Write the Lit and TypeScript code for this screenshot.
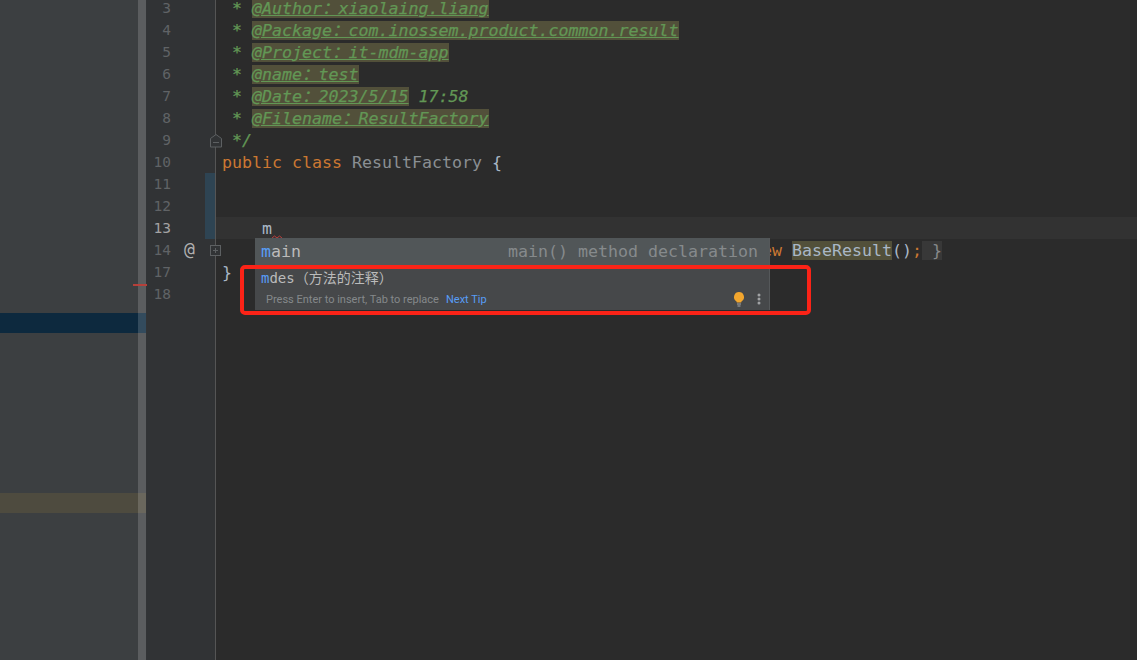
import { LitElement, html, css } from "lit";
import { customElement } from "lit/decorators.js";

const nums = ["3","4","5","6","7","8","9","10","11","12","13","14","17","18"];
const doc: [string, string, string?][] = [
  ["@Author：xiaolaing.liang", ""],
  ["@Package：com.inossem.product.common.result", ""],
  ["@Project：it-mdm-app", ""],
  ["@name：test", ""],
  ["@Date：2023/5/15", " 17:58"],
  ["@Filename：ResultFactory", ""],
];

@customElement("app-root")
export class AppRoot extends LitElement {
  static styles = css`
    :host { display: block; width: 1137px; height: 660px; overflow: hidden; background: #2b2b2b;
      font-family: "DejaVu Sans Mono", "Noto Sans CJK SC", monospace; font-size: 16.62px; }
    * { box-sizing: border-box; }
    .ide { display: flex; height: 660px; position: relative; }
    .side { width: 147px; flex: none; background: #3c3f41; display: flex; flex-direction: column; position: relative; border-right: 1px solid #323436; }
    .sel { height: 20px; margin-top: 313px; background: #0d293e; }
    .found { height: 20px; margin-top: 160px; background: #4e4b3f; }
    .strip { position: absolute; left: 138px; top: 0; bottom: 0; width: 8px; background: rgba(255,255,255,.16); }
    .tick { position: absolute; left: 133px; top: 284px; width: 14px; height: 2px; background: #b5403a; }
    .gutter { width: 69px; flex: none; background: #313335; border-right: 1px solid #555; display: flex; flex-direction: column; position: relative; }
    .nums { margin-top: -3px; width: 24px; text-align: right; color: #606366; font-size: 14.5px; }
    .num { height: 22px; line-height: 22px; }
    .num.cur { color: #a4a3a3; }
    .change { position: absolute; left: 58px; top: 173px; width: 10px; height: 66px; background: #2e4453; }
    .at { position: absolute; left: 37px; top: 238px; color: #b0b0b0; font-size: 18px; line-height: 22px; }
    .fold { position: absolute; left: 63px; }
    .editor { flex: 1; min-width: 0; padding: 0 0 0 6px; margin-top: -2px; position: relative; }
    .line { height: 22px; line-height: 22px; white-space: pre; color: #a9b7c6; }
    .cur-line { position: absolute; left: 0; right: 0; top: 219px; height: 22px; background: #323232; }
    .line > span { position: relative; }
    .c { color: #629755; font-style: italic; -webkit-text-stroke: .25px #629755; }
    .tag { background: #52503a; text-decoration: underline; }
    .k { color: #cc7832; }
    .nm { color: #8a8f93; }
    .hl { background: #52503a; }
    .fb { background: #383838; color: #87898b; }
    .squig { position: absolute; left: 272px; top: 235px; }
    .popup { position: absolute; left: 255px; top: 238px; width: 515px; height: 72px; background: #46484a; display: flex; flex-direction: column; border-right: 1px solid #55585a; }
    .r1 { height: 27px; background: #515658; display: flex; justify-content: space-between; align-items: center; padding: 0 11px 0 6px; color: #bbbbbb; }
    .r1 .hint { color: #868a8c; }
    .m { color: #589df6; }
    .r2 { height: 25px; line-height: 26px; padding-left: 6px; color: #bbbbbb; font-size: 14px; white-space: pre; }
    .r3 { flex: 1; display: flex; align-items: center; padding: 0 8px 2px 11px; font: 11px "Roboto", "Liberation Sans", sans-serif; color: #85888a; }
    .r3 a { color: #589df6; margin-left: 7px; }
    .r3 .sp { flex: 1; }
    .r3 svg { display: block; }
    .bulb { margin-right: 11px; }
    .frame { position: absolute; left: 240px; top: 265px; width: 571px; height: 50px; border: 4.5px solid #fb2317; border-radius: 5px; }
  `;

  render() {
    return html`<div class="ide">
      <div class="side">
        <div class="sel"></div>
        <div class="found"></div>
        <div class="strip"></div>
        <div class="tick"></div>
      </div>
      <div class="gutter">
        <div class="nums">
          ${nums.map((n) => html`<div class="num ${n === "13" ? "cur" : ""}">${n}</div>`)}
        </div>
        <div class="change"></div>
        <div class="at">@</div>
        <svg class="fold" style="top:134px" width="12" height="14" viewBox="0 0 12 14" fill="none" stroke="#5d6062">
          <path d="M.5 4.5 6 .5l5.5 4v8.5H.5z" fill="#313335"/><path d="M3 8.5h6"/>
        </svg>
        <svg class="fold" style="top:245px" width="12" height="12" viewBox="0 0 12 12" fill="none" stroke="#5d6062">
          <rect x=".5" y=".5" width="10" height="10" fill="#313335"/><path d="M3 5.5h5M5.5 3v5"/>
        </svg>
      </div>
      <div class="editor">
        <div class="cur-line"></div>
        ${doc.map(([a, b]) => html`<div class="line"><span class="c"> * <span class="tag">${a}</span>${b}</span></div>`)}
        <div class="line"><span class="c"> */</span></div>
        <div class="line"><span class="k">public class </span><span class="nm">ResultFactory </span><span>{</span></div>
        <div class="line"></div>
        <div class="line"></div>
        <div class="line"><span>    m</span></div>
        <div class="line"><span>    <span class="k">public static </span>BaseResult getInstances() { <span class="k">return new</span> <span class="hl">BaseResult</span>()<span class="k">;</span><span class="fb"> }</span></span></div>
        <div class="line"><span>}</span></div>
        <div class="line"></div>
      </div>
      <svg class="squig" width="10" height="4" viewBox="0 0 10 4" fill="none" stroke="#bc3f3c"><path d="M0 3 2.5 1 5 3l2.5-2L10 3"/></svg>
      <div class="popup">
        <div class="r1"><span><span class="m">m</span>ain</span><span class="hint">main() method declaration</span></div>
        <div class="r2"><span class="m">m</span>des（方法的注释）</div>
        <div class="r3">
          <span>Press Enter to insert, Tab to replace</span><a>Next Tip</a><span class="sp"></span>
          <svg class="bulb" width="14" height="16" viewBox="0 0 14 16"><path d="M7 1a5 5 0 0 0-3 9c.6.5.8 1 .8 1.5h4.4c0-.5.2-1 .8-1.5A5 5 0 0 0 7 1z" fill="#f2a62e"/><path d="M5 13h4M5.5 15h3" stroke="#a8a8a8" fill="none"/></svg>
          <svg width="4" height="12" viewBox="0 0 4 12" fill="#a0a2a4"><circle cx="2" cy="2" r="1.5"/><circle cx="2" cy="6" r="1.5"/><circle cx="2" cy="10" r="1.5"/></svg>
        </div>
      </div>
      <div class="frame"></div>
    </div>`;
  }
}
